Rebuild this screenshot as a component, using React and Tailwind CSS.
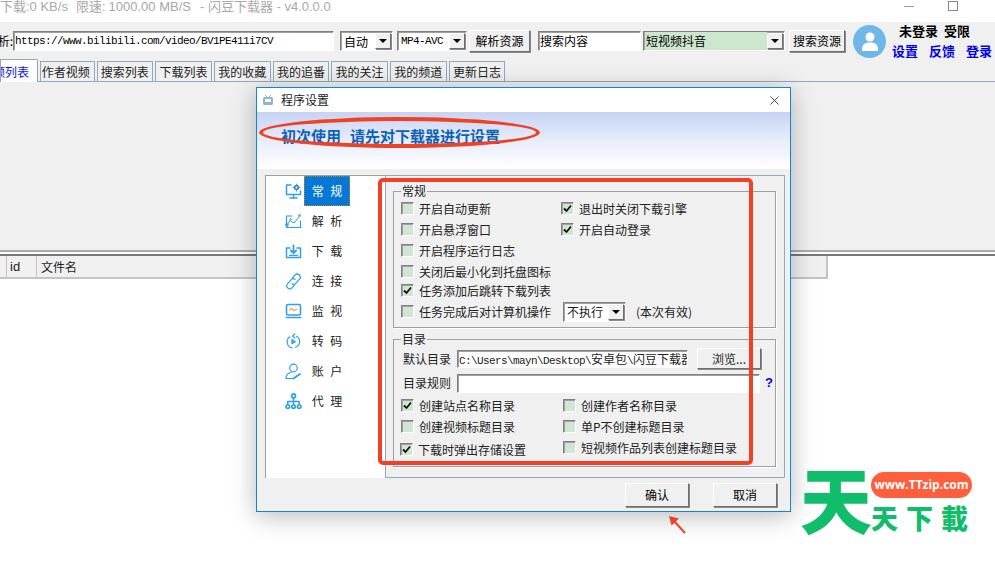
import { X } from "lucide-react";

const cjk = "font-['Noto_Sans_CJK_SC','Liberation_Sans',sans-serif]";
const mono = "font-['Liberation_Mono','Noto_Sans_CJK_SC',monospace]";

const tabs = ["搜索列表", "下载列表", "我的收藏", "我的追番", "我的关注", "我的频道", "更新日志"];

const IconWrap = ({ children }) => (
  <svg width="17" height="17" viewBox="0 0 17 17" fill="none" stroke="#2f9fe6" strokeWidth="1.500" strokeLinecap="round" strokeLinejoin="round">
    {children}
  </svg>
);

const navItems = [
  {
    name: "常 规",
    icon: (
      <IconWrap>
        <path d="M6 2H1.500v9.500h14V8" />
        <path d="M8.500 11.500V14M5 15h7" />
        <circle cx="11.500" cy="4.500" r="1.800" stroke="#3a8fd0" strokeWidth="1.800" />
        <path d="M11.500 1v.5M11.500 7.500v.5M8 4.500h.5M14.500 4.500h.5" strokeWidth="1.200" />
      </IconWrap>
    ),
  },
  {
    name: "解 析",
    icon: (
      <IconWrap>
        <path d="M7 3H1.500v11.500h14V8" strokeWidth="1.200" />
        <path d="M2 12l3-4.500 4 2.500 5-6" strokeWidth="1" />
        <circle cx="5.500" cy="6.500" r="1.200" fill="#5bd06a" stroke="none" />
        <circle cx="14.500" cy="2.500" r="1.500" fill="#5bd06a" stroke="none" />
        <circle cx="2" cy="12" r="1" fill="white" />
      </IconWrap>
    ),
  },
  {
    name: "下 载",
    icon: (
      <IconWrap>
        <path d="M5 5H1.500v9.500h14V5H12" />
        <path d="M8.500 2.500v7M5.800 7.500l2.700 2.700 2.700-2.700" strokeWidth="1.800" />
        <path d="M4.500 12.300h8" strokeWidth="1.200" />
      </IconWrap>
    ),
  },
  {
    name: "连 接",
    icon: (
      <IconWrap>
        <path d="M7.500 5l2.500-2.800a3 3 0 0 1 4.500 4l-3.500 4a3 3 0 0 1-4 .5" strokeWidth="1.200" />
        <path d="M9.500 12l-2.500 2.800a3 3 0 0 1-4.500-4l3.500-4a3 3 0 0 1 4-.5" strokeWidth="1.200" />
      </IconWrap>
    ),
  },
  {
    name: "监 视",
    icon: (
      <IconWrap>
        <rect x="1.500" y="1.500" width="14" height="10.500" rx="1.500" strokeWidth="1.600" />
        <path d="M4.500 7q1.500-2.500 3.500-.5t4 -.5" stroke="#f0a060" strokeWidth="1.200" />
        <path d="M1.500 14.500h14" strokeWidth="1.600" />
      </IconWrap>
    ),
  },
  {
    name: "转 码",
    icon: (
      <IconWrap>
        <path d="M5 3.800a6 6 0 0 0 2 11" strokeWidth="1.200" />
        <path d="M11.500 3.200a6 6 0 0 1-1 11" strokeWidth="1.200" />
        <path d="M9.800 1L7.500 3l2.300 2" strokeWidth="1.200" />
        <path d="M6.800 6.500v4.500l3.700-2.200z" fill="#2f9fe6" strokeWidth="0.800" />
      </IconWrap>
    ),
  },
  {
    name: "账 户",
    icon: (
      <IconWrap>
        <circle cx="8.500" cy="5" r="3.800" strokeWidth="1.200" />
        <path d="M1 15.500c0-3.500 2.500-5.500 5-6M1 15.500h6.500" strokeWidth="1.200" />
        <path d="M8.500 15.500l6.500-4.500" strokeWidth="1.800" />
      </IconWrap>
    ),
  },
  {
    name: "代 理",
    icon: (
      <IconWrap>
        <circle cx="8.500" cy="3" r="2" strokeWidth="1.800" />
        <path d="M8.500 5v6M2.800 11.500V8.500h11.400v3" strokeWidth="1.500" />
        <circle cx="2.800" cy="13.500" r="1.800" strokeWidth="1.600" />
        <circle cx="8.500" cy="13.500" r="1.800" strokeWidth="1.600" />
        <circle cx="14.200" cy="13.500" r="1.800" strokeWidth="1.600" />
      </IconWrap>
    ),
  },
];

const sunken = "border border-t-[#808080] border-l-[#808080] border-r-white border-b-white shadow-[inset_1px_1px_0_#a0a0a0]";
const raised = "border border-t-white border-l-white border-r-[#6e6e6e] border-b-[#6e6e6e] shadow-[1px_1px_0_#8a8a8a] bg-[#f0f0f0]";

function Check({ label, checked, className = "" }) {
  return (
    <div className={`flex items-center h-[21px] text-[12px] text-[#222] ${className}`}>
      <span className={`flex items-center justify-center w-[13px] h-[13px] mr-[5px] shrink-0 bg-[#cfe6d2] ${sunken}`}>
        {checked && (
          <svg width="9" height="9" viewBox="0 0 9 9">
            <path d="M1 4.500l2.500 2.500L8 1.500" fill="none" stroke="#111" strokeWidth="1.800" />
          </svg>
        )}
      </span>
      <span className="whitespace-nowrap">{label}</span>
    </div>
  );
}

function Arrow() {
  return (
    <span className={`flex items-center justify-center w-[16px] h-[16px] shrink-0 ${raised}`}>
      <span className="w-0 h-0 border-x-[4px] border-x-transparent border-t-[4px] border-t-black" />
    </span>
  );
}

function Combo({ width, children, className = "" }) {
  return (
    <div className={`flex items-center h-[20px] pl-[3px] pr-[1px] bg-white text-[12px] shrink-0 ${sunken} ${className}`} style={{ width }}>
      <span className="flex-1 overflow-hidden whitespace-nowrap leading-[17px]">{children}</span>
      <Arrow />
    </div>
  );
}

function Group({ title, className = "", children }) {
  return (
    <div className={`relative border border-[#a0a0a0] shadow-[1px_1px_0_white] ${className}`}>
      <span className="absolute left-[7px] top-[-9px] bg-[#f0f0f0] px-[1px] text-[12px] leading-[16px] text-[#222]">{title}</span>
      {children}
    </div>
  );
}

export default function App() {
  return (
    <div className={`relative w-[995px] h-[561px] overflow-hidden bg-white ${cjk}`}>
      {/* title bar */}
      <div className="flex items-start h-[22px] text-[13px] leading-[13px] text-[#a8a8a8] font-['Liberation_Sans','Noto_Sans_CJK_SC',sans-serif]">
        <span className="whitespace-nowrap">下载:0 KB/s</span>
        <span className="whitespace-nowrap ml-[8px]">限速:</span>
        <span className="whitespace-nowrap ml-[3px]">1000.00 MB/S</span>
        <span className="whitespace-nowrap ml-[9px]">- 闪豆下载器 - v4.0.0.0</span>
        <span className="ml-auto flex items-start">
          <span className="w-[10px] h-px bg-[#999] mr-[34px] mt-[6px]" />
          <span className="w-[10px] h-[10px] border border-[#888] mr-[37px] mt-px" />
        </span>
      </div>

      {/* main window */}
      <div className="h-[228px] bg-[#f0f0f0]">
        <div className="flex items-center h-[38px]">
          <span className="w-[13px] shrink-0 overflow-hidden flex justify-end text-[12px] whitespace-nowrap">析:</span>
          <div className={`w-[321px] h-[20px] px-[1px] flex items-center bg-white shrink-0 ${mono} text-[11px] tracking-[-0.6px] ${sunken}`}>
            https://www.bilibili.com/video/BV1PE411i7CV
          </div>
          <Combo width={53} className="ml-[6px]">自动</Combo>
          <Combo width={70} className={`ml-[4px] ${mono} !text-[11px] tracking-[-0.6px]`}>MP4-AVC</Combo>
          <button className={`w-[61px] h-[22px] ml-[2px] text-[12px] ${raised}`}>解析资源</button>
          <div className={`w-[103px] h-[20px] ml-[8px] pl-[1px] bg-white text-[12px] leading-[18px] ${sunken}`}>搜索内容</div>
          <div className={`w-[142px] h-[20px] ml-[2px] flex items-center pl-[1px] pr-[1px] text-[12px] bg-white ${sunken}`}>
            <span className="flex-1 h-full bg-[#cde7cf] leading-[17px] pl-[1px]">短视频抖音</span>
            <Arrow />
          </div>
          <button className={`w-[56px] h-[22px] ml-[4px] text-[12px] ${raised}`}>搜索资源</button>
          <div className="w-[33px] h-[33px] ml-[8px] shrink-0 rounded-full bg-[#6eb7e8] flex items-center justify-center">
            <svg width="22" height="24" viewBox="0 0 22 24" fill="white">
              <circle cx="11" cy="8" r="4.500" />
              <path d="M3 21c0-6 3-7.500 8-7.500S19 15 19 21q0 1-1 1H4q-1 0-1-1z" />
            </svg>
          </div>
          <div className="ml-[6px] w-[100px] text-[13px] font-bold leading-[18px]">
            <div className="pl-[7px] whitespace-pre">未登录  受限</div>
            <div className="flex gap-[11px] text-[#0000f0] mt-[2px]">
              <span>设置</span><span>反馈</span><span>登录</span>
            </div>
          </div>
        </div>

        <div className="flex items-end h-[22px] border-b border-[#8fa9bd] text-[12px] gap-[2px]">
          <div className="w-[38px] h-[23px] pr-[8px] pt-[2px] overflow-hidden flex justify-end items-center bg-white border border-b-0 border-[#8fa9bd] text-[#1010e0] whitespace-nowrap rounded-tr-[2px] -mb-px">频列表</div>
          <div className="w-[54.500px] h-[20px] pt-[1px] pr-[3px] shrink-0 flex justify-center items-center bg-[#f0f0f0] border border-b-0 border-[#8fa9bd] text-[#222] whitespace-nowrap">作者视频</div>
          {tabs.map((tab) => (
            <div key={tab} className="w-[56.700px] h-[20px] pt-[1px] shrink-0 flex justify-center items-center bg-[#f0f0f0] border border-b-0 border-[#8fa9bd] text-[#222] whitespace-nowrap">{tab}</div>
          ))}
        </div>
      </div>

      {/* table header */}
      <div className="border-t-2 border-[#aaa] pt-[2px]">
        <div className="h-[25px] border-t-2 border-[#777]">
          <div className="flex w-[828px] h-[23px] border-b-2 border-r-2 border-[#c4c4c4] bg-[#f0f0f0] text-[12px] text-[#222] leading-[21px]">
            <span className="w-[7px] border-r border-[#c4c4c4]" />
            <span className="w-[30px] pl-[3px] border-r border-[#c4c4c4] text-[13px] font-['Liberation_Sans',sans-serif]">id</span>
            <span className="pl-[4px]">文件名</span>
          </div>
        </div>
      </div>

      {/* settings dialog */}
      <div className="absolute left-[256px] top-[87px] w-[535px] h-[425px] border border-[#1583d8] bg-[#f0f0f0] shadow-[0_4px_24px_rgba(0,0,0,0.28)]">
        <div className="flex items-center h-[24px] bg-white pl-[5px] pr-[8px] text-[12px] text-[#222]">
          <svg width="12" height="12" viewBox="0 0 12 12" className="mr-[7px]">
            <rect x="1" y="3" width="10" height="8" rx="1.500" fill="#8fb4cc" />
            <path d="M3 1l2 2M9 1L7 3" stroke="#8fb4cc" />
            <rect x="3" y="5" width="6" height="3" fill="white" />
          </svg>
          程序设置
          <X size={15} strokeWidth={1.300} className="ml-auto text-[#222]" />
        </div>
        <div className="h-[57px] pl-[24px] pt-[14px] bg-gradient-to-b from-[#c6d3f2] via-[#e8edfb] to-white text-[15px] font-bold text-[#0b62b8] leading-[20px]">
          初次使用<span className="ml-[9px]">请先对下载器进行设置</span>
        </div>

        <div className="flex h-[303px] ml-[8px] mr-[5px] mt-[6px]">
          <div className="w-[120px] bg-white border-l border-t border-[#a0a0a0]">
            {navItems.map((item, i) => (
              <div key={item.name} className="flex items-center h-[30px] pl-[18px] gap-[2px]">
                <span className="w-[18px] flex justify-center">{item.icon}</span>
                <span
                  className={`w-[46px] h-[30px] flex items-center justify-center text-[12px] [word-spacing:4px] ${
                    i === 0 ? "bg-[#0478d8] text-white outline-1 outline-dotted outline-[#c08020] -outline-offset-1" : "text-[#222]"
                  }`}
                >
                  {item.name}
                </span>
              </div>
            ))}
          </div>

          <div className="flex-1 border border-[#8fa9bd] pl-[7px] pr-[8px] pt-[15px]">
            <Group title="常规" className="h-[137px] pt-[6px] pl-[7px]">
              <div className="grid grid-cols-[160px_1fr]">
                <Check label="开启自动更新" />
                <Check label="退出时关闭下载引擎" checked />
                <Check label="开启悬浮窗口" />
                <Check label="开启自动登录" checked />
                <Check label="开启程序运行日志" />
                <span />
                <Check label="关闭后最小化到托盘图标" />
                <span />
                <Check label="任务添加后跳转下载列表" checked className="-mt-[2px]" />
                <span />
                <Check label="任务完成后对计算机操作" />
                <div className="flex items-center h-[21px] ml-[2px] text-[12px] text-[#222]">
                  <Combo width={63}>不执行</Combo>
                  <span className="ml-[10px] whitespace-nowrap">(本次有效)</span>
                </div>
              </div>
            </Group>

            <Group title="目录" className="h-[128px] mt-[11px] pl-[7px] pt-[8px]">
              <div className="flex items-center h-[21px] text-[12px] text-[#222]">
                <span className="w-[56px] pl-[2px]">默认目录</span>
                <div className={`w-[231px] h-[18px] bg-white pl-[1px] overflow-hidden whitespace-nowrap ${mono} text-[11px] leading-[16px] tracking-[-0.6px] ${sunken}`}>
                  C:\Users\mayn\Desktop\<span className={`${cjk} text-[12px] tracking-normal`}>安卓包</span>\<span className={`${cjk} text-[12px] tracking-normal`}>闪豆下载器</span>
                </div>
                <button className={`w-[64px] h-[21px] ml-[9px] ${raised}`}>浏览...</button>
              </div>
              <div className="flex items-center h-[20px] mt-[4px] text-[12px] text-[#222]">
                <span className="w-[56px] pl-[2px]">目录规则</span>
                <div className={`w-[303px] h-[19px] bg-white ${sunken}`} />
                <span className="ml-[5px] text-[#0000e0] text-[13px] font-bold font-['Liberation_Sans',sans-serif]">?</span>
              </div>
              <div className="grid grid-cols-[162px_1fr] mt-[2px]">
                <Check label="创建站点名称目录" checked />
                <Check label="创建作者名称目录" />
                <Check label="创建视频标题目录" />
                <Check label="单P不创建标题目录" />
                <Check label="下载时弹出存储设置" checked className="-ml-[1px] mt-[2px]" />
                <Check label="短视频作品列表创建标题目录" />
              </div>
            </Group>
          </div>
        </div>

        <div className="flex justify-end gap-[24px] mt-[5px] pr-[13px]">
          <button className={`w-[64px] h-[24px] text-[12px] ${raised}`}>确认</button>
          <button className={`w-[64px] h-[24px] text-[12px] ${raised}`}>取消</button>
        </div>
      </div>

      {/* red annotations */}
      <div className="absolute left-[378px] top-[178px] w-[375px] h-[287px] border-[4px] border-[#ef4126] rounded-[5px]" />
      <div className="absolute left-[259px] top-[117px] w-[281px] h-[31px] border-[4px] border-[#ef4126] rounded-[50%]" />
      <svg className="absolute left-[666px] top-[513px]" width="22" height="22" viewBox="0 0 22 22">
        <path d="M19 20L8 8" stroke="#ef4126" strokeWidth="2" />
        <path d="M3 3l10 2.500-7.500 7z" fill="#ef4126" />
      </svg>

      {/* watermark logo */}
      <span className="absolute left-[800px] top-[449px] text-[72px] leading-[96px] font-black text-[#10bd6b]">天</span>
      <span className="absolute left-[871px] top-[472px] w-[101px] h-[26px] rounded-full bg-[#ff5f3c] flex items-center justify-center text-[12px] font-bold text-white font-['Open_Sans',sans-serif]">www.TTzip.com</span>
      <span className="absolute left-[871px] top-[498px] text-[27px] leading-[40px] tracking-[8px] font-black text-[#10bd6b] whitespace-nowrap">天下載</span>
    </div>
  );
}
